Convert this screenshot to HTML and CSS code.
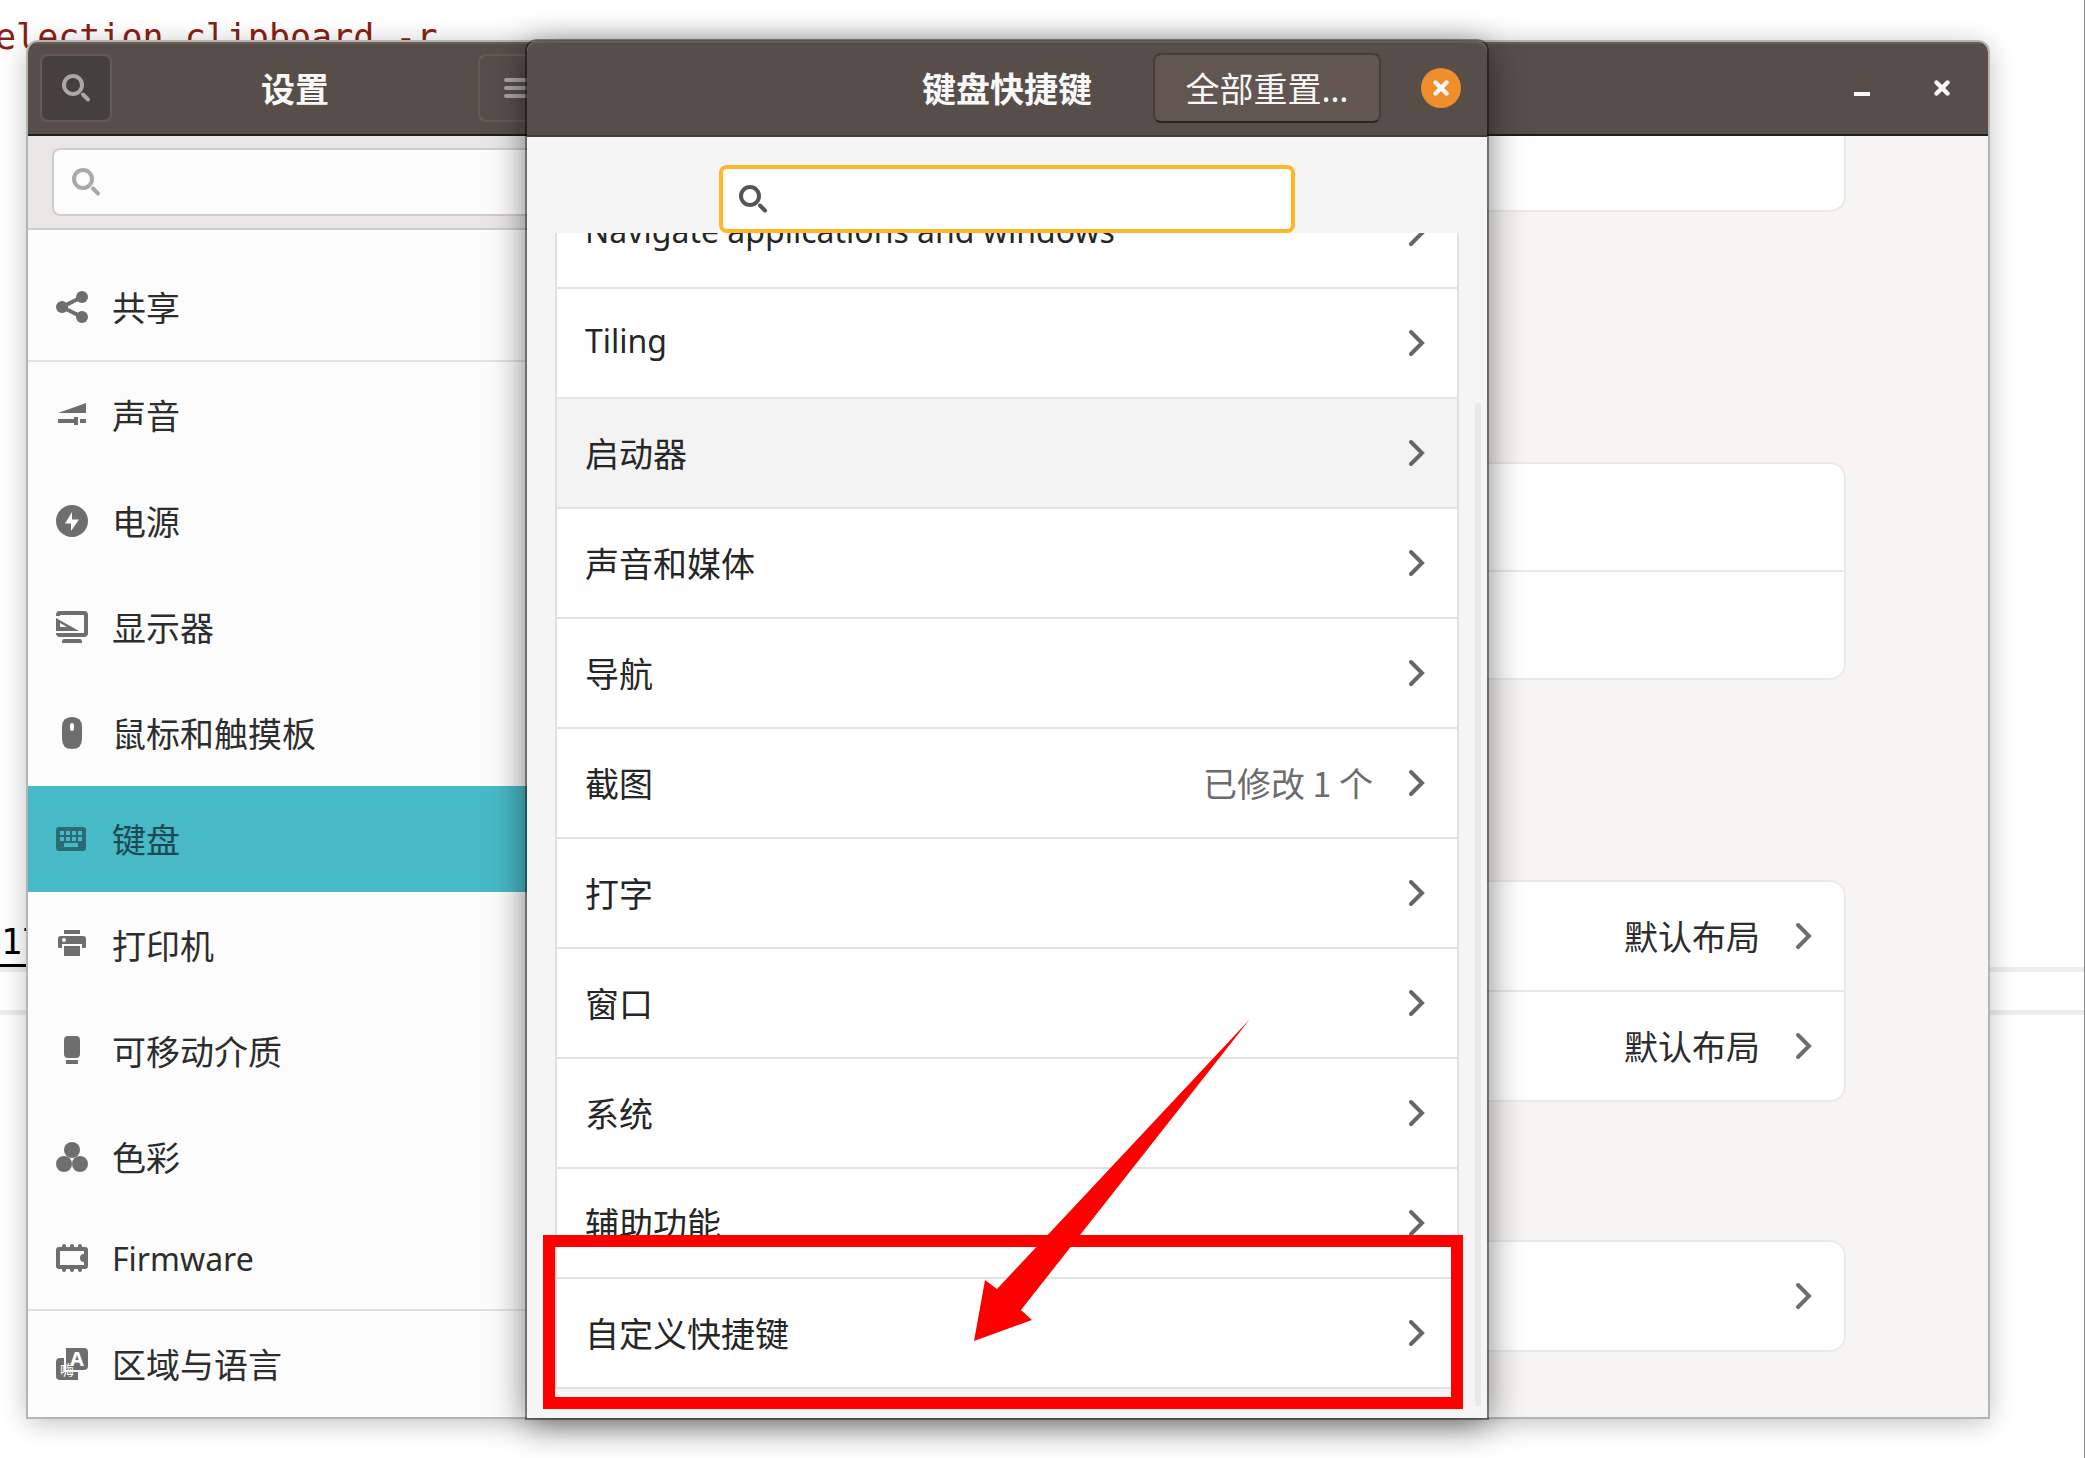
FILE: index.html
```html
<!DOCTYPE html>
<html lang="zh-CN">
<head>
<meta charset="utf-8">
<title>设置</title>
<link rel="stylesheet" href="styles.css">
</head>
<body>
<svg class="sprite" aria-hidden="true">
  <symbol id="search" viewBox="0 0 32 32"><circle cx="13" cy="13" r="9" fill="none" stroke="currentColor" stroke-width="4"/><path d="M23 22.500l5 5" stroke="currentColor" stroke-width="4" stroke-linecap="round"/></symbol>
  <symbol id="next" viewBox="0 0 32 32"><path d="M14 5L25 16L14 27" fill="none" stroke="currentColor" stroke-width="4" stroke-linecap="round"/></symbol>
  <symbol id="close" viewBox="0 0 16 16"><path d="M2.500 2.500l11 11M13.500 2.500l-11 11" stroke="currentColor" stroke-width="4.400" stroke-linecap="round"/></symbol>
</svg>
<div class="desktop">
  <div class="document">
    <p class="code-line">election clipboard -r</p>
    <div class="status"><span class="count">17</span></div>
    <div class="strip"></div>
  </div>

  <section class="window" aria-label="设置">
    <header class="side-header">
      <button class="tool pressed" aria-label="搜索"><svg class="icon"><use href="#search"/></svg></button>
      <h1 class="title">设置</h1>
      <button class="tool" aria-label="菜单"><svg class="icon" viewBox="0 0 32 32"><path d="M8 8h20M8 16h20M8 24h20" stroke="currentColor" stroke-width="4" stroke-linecap="round"/></svg></button>
    </header>
    <header class="main-header">
      <button class="win-button" aria-label="最小化"><svg class="glyph" viewBox="0 0 16 16"><path d="M0 12h16v4H0z" fill="currentColor"/></svg></button>
      <button class="win-button" aria-label="关闭"><svg class="glyph"><use href="#close"/></svg></button>
    </header>
    <aside class="sidebar">
      <div class="side-search">
        <label class="entry"><svg class="icon"><use href="#search"/></svg><input type="search" aria-label="搜索设置"></label>
      </div>
      <nav class="nav">
        <a class="nav-item divided" href="#sharing"><svg class="icon" viewBox="0 0 32 32"><path d="M26 6L6 16l20 10" fill="none" stroke="currentColor" stroke-width="4"/><g fill="currentColor"><circle cx="6" cy="16" r="6"/><circle cx="26" cy="6" r="6"/><circle cx="26" cy="26" r="6"/></g></svg>共享</a>
        <a class="nav-item" href="#sound"><svg class="icon" viewBox="0 0 32 32"><path fill="currentColor" d="M2 14L30 4v10zM2 20h16v-2h4v8h-4v-2H2zM24 20h6v4h-6z"/></svg>声音</a>
        <a class="nav-item" href="#power"><svg class="icon" viewBox="0 0 32 32"><path fill="currentColor" fill-rule="evenodd" d="M16 0a16 16 0 1 1 0 32a16 16 0 0 1 0-32zM16 7L9 18.500h6V26l8-11.500h-7z"/></svg>电源</a>
        <a class="nav-item" href="#displays"><svg class="icon" viewBox="0 0 32 32"><path d="M2 5V4q0-2 2-2h24q2 0 2 2v18q0 2-2 2H4q-2 0-2-2" fill="none" stroke="currentColor" stroke-width="4"/><path fill="currentColor" fill-rule="evenodd" d="M0 7l23 13H0zM4 12v4h7zM8 28h16q2 0 2 4H6q0-4 2-4z"/></svg>显示器</a>
        <a class="nav-item" href="#mouse"><svg class="icon" viewBox="0 0 32 32"><path fill="currentColor" fill-rule="evenodd" d="M16 0q10 0 10 10v12q0 10-10 10T6 22V10Q6 0 16 0zM16 6q-2 0-2 2v4q0 2 2 2t2-2V8q0-2-2-2z"/></svg>鼠标和触摸板</a>
        <a class="nav-item current" href="#keyboard" aria-current="page"><svg class="icon" viewBox="0 0 32 32"><path fill="currentColor" fill-rule="evenodd" d="M3 4h24q3 0 3 3v18q0 3-3 3H3q-3 0-3-3V7q0-3 3-3zM4 8v4h4V8zM10 8v4h4V8zM16 8v4h4V8zM22 8v4h4V8zM4 14v4h4v-4zM10 14v4h4v-4zM16 14v4h4v-4zM22 14v4h4v-4zM8 20v4h14v-4z"/></svg>键盘</a>
        <a class="nav-item" href="#printers"><svg class="icon" viewBox="0 0 32 32"><path fill="currentColor" fill-rule="evenodd" d="M8 1h16v4H8zM5 7h22q3 0 3 3v8q0 1-2 1h-2v-4H6v4H4q-2 0-2-1v-8q0-3 3-3zM8 9a2 2 0 1 0 .01 0zM8 17h16v10H8z"/></svg>打印机</a>
        <a class="nav-item" href="#media"><svg class="icon" viewBox="0 0 32 32"><path fill="currentColor" d="M12 1h8q4 0 4 4v14q0 4-4 4h-8q-4 0-4-4V5q0-4 4-4zM10 25h12v4H10z"/></svg>可移动介质</a>
        <a class="nav-item" href="#color"><svg class="icon" viewBox="0 0 32 32"><g fill="currentColor"><circle cx="16" cy="9" r="8"/><circle cx="8" cy="23" r="8"/><circle cx="24" cy="23" r="8"/></g></svg>色彩</a>
        <a class="nav-item latin divided" href="#firmware"><svg class="icon" viewBox="0 0 32 32"><rect x="2" y="6" width="28" height="18" rx="1" fill="none" stroke="currentColor" stroke-width="4"/><path d="M8 3v3M16 3v3M24 3v3M8 24v3M16 24v3M24 24v3" stroke="currentColor" stroke-width="4" stroke-linecap="round"/><circle cx="28" cy="15" r="4" fill="currentColor"/></svg>Firmware</a>
        <a class="nav-item" href="#region"><svg class="icon" viewBox="0 0 32 32"><path fill="currentColor" d="M4 10h4v14h14v8H4q-4 0-4-4V14q0-4 4-4zM10 0h18q4 0 4 4v14q0 4-4 4H10z"/><text x="21" y="18" class="badge-letter">A</text><text x="4" y="27" class="badge-hanzi">嗨</text></svg>区域与语言</a>
      </nav>
    </aside>
    <main class="panel">
      <div class="card cut"><div class="card-row"></div></div>
      <div class="card inputs"><div class="card-row"></div><div class="card-row"></div></div>
      <div class="card special">
        <a class="card-row" href="#alternate">默认布局<svg class="icon"><use href="#next"/></svg></a>
        <a class="card-row" href="#compose">默认布局<svg class="icon"><use href="#next"/></svg></a>
      </div>
      <div class="card shortcuts"><a class="card-row" href="#shortcuts" aria-label="键盘快捷键"><svg class="icon"><use href="#next"/></svg></a></div>
    </main>
  </section>

  <section class="dialog" role="dialog" aria-label="键盘快捷键">
    <header class="dialog-header">
      <h2 class="title">键盘快捷键</h2>
      <div class="actions">
        <button class="reset">全部重置<span class="dots">…</span></button>
        <button class="dismiss" aria-label="关闭"><svg class="glyph"><use href="#close"/></svg></button>
      </div>
    </header>
    <label class="entry focused"><svg class="icon"><use href="#search"/></svg><input type="search" aria-label="搜索快捷键"></label>
    <div class="scroller">
      <div class="list">
        <a class="row latin" href="#navigate"><span class="name">Navigate applications and windows</span><svg class="icon"><use href="#next"/></svg></a>
        <a class="row latin" href="#tiling"><span class="name">Tiling</span><svg class="icon"><use href="#next"/></svg></a>
        <a class="row hovered" href="#launchers"><span class="name">启动器</span><svg class="icon"><use href="#next"/></svg></a>
        <a class="row" href="#sound-media"><span class="name">声音和媒体</span><svg class="icon"><use href="#next"/></svg></a>
        <a class="row" href="#navigation"><span class="name">导航</span><svg class="icon"><use href="#next"/></svg></a>
        <a class="row" href="#screenshots"><span class="name">截图</span><span class="changed">已修改 1 个</span><svg class="icon"><use href="#next"/></svg></a>
        <a class="row" href="#typing"><span class="name">打字</span><svg class="icon"><use href="#next"/></svg></a>
        <a class="row" href="#windows"><span class="name">窗口</span><svg class="icon"><use href="#next"/></svg></a>
        <a class="row" href="#system"><span class="name">系统</span><svg class="icon"><use href="#next"/></svg></a>
        <a class="row" href="#accessibility"><span class="name">辅助功能</span><svg class="icon"><use href="#next"/></svg></a>
        <a class="row" href="#custom"><span class="name">自定义快捷键</span><svg class="icon"><use href="#next"/></svg></a>
      </div>
    </div>
    <div class="scrollbar"></div>
    <svg class="annotation" viewBox="0 0 920 392" aria-hidden="true"><rect x="6" y="223" width="908" height="162" fill="none" stroke="#f00" stroke-width="12"/><path fill="#f00" d="M707 1L454 271L442 262L431 323L489 302L478 292z"/></svg>
  </section>
</div>
</body>
</html>
```
FILE: styles.css
```css
* { box-sizing: border-box; }

body {
  margin: 0;
  background: #fff;
  color: #2d2d2d;
  font-family: "Noto Sans CJK SC", sans-serif;
  font-size: 34px;
  line-height: 50px;
}

a { color: inherit; text-decoration: none; }

button, input {
  margin: 0;
  padding: 0;
  border: 0;
  background: none;
  color: inherit;
  font: inherit;
}

.sprite { display: none; }
.icon { width: 32px; height: 32px; flex: none; overflow: visible; }
.glyph { width: 16px; height: 16px; flex: none; }
.latin { font-family: "Noto Sans", sans-serif; font-size: 32px; }

.desktop {
  position: relative;
  min-height: 100vh;
  overflow: hidden;
  border-right: 1px solid #8a8a8a;
}

/* Document behind the windows */
.document {
  padding-top: 16px;
  font-family: "DejaVu Sans Mono", monospace;
  font-size: 35px;
  line-height: 42px;
}
.code-line { margin: 0 0 863px -5px; color: #8b1f14; }
.status { color: #000; border-bottom: 5px solid #ededed; }
.count { display: inline-block; width: 60px; padding-left: 1px; height: 46px; border-bottom: 3px solid #000; }
.strip { height: 43px; border-bottom: 5px solid #ededed; }

/* Settings window */
.window {
  position: absolute;
  inset: 42px 96px 41px 28px;
  display: grid;
  grid-template: 94px minmax(0, 1fr) / 534px minmax(0, 1fr);
  overflow: hidden;
  border-radius: 10px 10px 0 0;
  background: #f6f5f3;
  box-shadow: 0 0 0 2px #b5b5b5, 0 4px 28px rgba(0, 0, 0, .28);
}

.side-header, .main-header, .dialog-header {
  background: #574e49;
  color: #f8f8f8;
  box-shadow: inset 0 2px #675d56;
}
.side-header, .main-header { display: flex; align-items: center; border-bottom: 2px solid #1f1d1d; }
.side-header { justify-content: space-between; padding: 0 12px; }
.main-header { justify-content: flex-end; gap: 48px; padding-right: 30px; }
.title { margin: 0; font-size: 34px; font-weight: 700; line-height: 50px; }

.tool {
  display: grid;
  place-items: center;
  width: 72px;
  height: 68px;
  border: 2px solid #655b54;
  border-radius: 8px;
  color: #aaa7a5;
}
.pressed { background: #46403c; }
.win-button { display: grid; place-items: center; width: 32px; height: 32px; }

.sidebar { display: flex; flex-direction: column; min-height: 0; background: #fcfcfc; }
.side-search { padding: 12px 24px; background: #e9e7e5; border-bottom: 2px solid #d2cdca; }

.entry {
  display: flex;
  align-items: center;
  gap: 12px;
  height: 68px;
  padding: 0 16px;
  border: 2px solid #d2cdca;
  border-radius: 8px;
  background: #fcfcfc;
  color: #a8aaaa;
}
.entry input { flex: 1; min-width: 0; outline: none; }

.nav {
  flex: 1;
  min-height: 0;
  display: flex;
  flex-direction: column;
  justify-content: flex-end;
}
.nav-item { flex: none; display: flex; align-items: center; gap: 24px; padding: 28px; }
.nav-item .icon { color: #6e6e6e; }
.nav-item.latin { padding: 24px 28px 25px; }
.divided { border-bottom: 2px solid #e2e2e2; }
.nav-item.current { background: #48b9c7; color: #1c4a50; }
.nav-item.current .icon { color: #2a6b74; }
.badge-letter { fill: #fff; font: 700 20px "Noto Sans", sans-serif; text-anchor: middle; }
.badge-hanzi { fill: #fff; font-size: 14px; }

/* Keyboard panel */
.panel { min-width: 0; overflow: hidden; padding: 0 142px; }
.card { border: 2px solid #ebeae9; border-radius: 16px; background: #fff; }
.card-row {
  display: flex;
  align-items: center;
  justify-content: flex-end;
  gap: 24px;
  height: 108px;
  padding: 0 28px;
}
.card-row + .card-row { height: 110px; border-top: 2px solid #ebeae9; }
.card-row .icon { color: #6e6e6e; }
.cut { margin-top: -36px; }
.inputs { margin-top: 250px; }
.inputs .card-row { height: 106px; }
.inputs .card-row + .card-row { height: 108px; }
.special { margin-top: 200px; }
.shortcuts { margin-top: 138px; }

/* Shortcuts dialog */
.dialog {
  position: absolute;
  top: 41px;
  bottom: 40px;
  left: 527px;
  width: 960px;
  display: flex;
  flex-direction: column;
  border-radius: 10px 10px 0 0;
  background: #f5f5f5;
  color: #262626;
  box-shadow: 0 0 0 2px rgba(0, 0, 0, .4), 0 6px 36px rgba(0, 0, 0, .55);
}
.dialog-header {
  display: grid;
  grid-template-columns: 1fr auto 1fr;
  align-items: center;
  height: 96px;
  padding: 0 26px;
  border-bottom: 2px solid #453a37;
  border-radius: 10px 10px 0 0;
}
.dialog-header .title { grid-column: 2; }
.actions { display: flex; align-items: center; justify-content: flex-end; gap: 40px; }
.reset {
  width: 228px;
  height: 70px;
  border: 2px solid #463d39;
  border-bottom-color: #2a2625;
  border-radius: 8px;
  background: #615750;
}
.dots { font-family: "Noto Sans", sans-serif; }
.dismiss {
  display: grid;
  place-items: center;
  width: 40px;
  height: 40px;
  border-radius: 50%;
  background: #f08d2c;
}

.focused {
  width: 60%;
  margin: 28px auto 0;
  padding: 0 14px;
  border: 4px solid #ffb627;
  background: #fff;
  color: #555;
}

.scroller {
  flex: 1;
  min-height: 0;
  display: flex;
  flex-direction: column;
  justify-content: flex-end;
  overflow: hidden;
  padding: 0 28px 29px;
}
.list { flex: none; border: 2px solid #e0e0e0; border-bottom: 0; background: #fff; }
.row {
  display: flex;
  align-items: center;
  gap: 24px;
  height: 110px;
  padding: 0 28px;
  border-bottom: 2px solid #e2e2e2;
}
.row .icon { color: #666; }
.hovered { background: #f3f3f3; }
.name { flex: 1; }
.latin .name { padding-bottom: 4px; }
.changed { color: #6c6c6c; }

.scrollbar {
  position: absolute;
  top: 362px;
  right: 6px;
  bottom: 11px;
  width: 6px;
  border-radius: 3px;
  background: #e9e9e9;
}
.annotation {
  position: absolute;
  left: 16px;
  bottom: 8px;
  width: 920px;
  height: 392px;
  pointer-events: none;
}
```
